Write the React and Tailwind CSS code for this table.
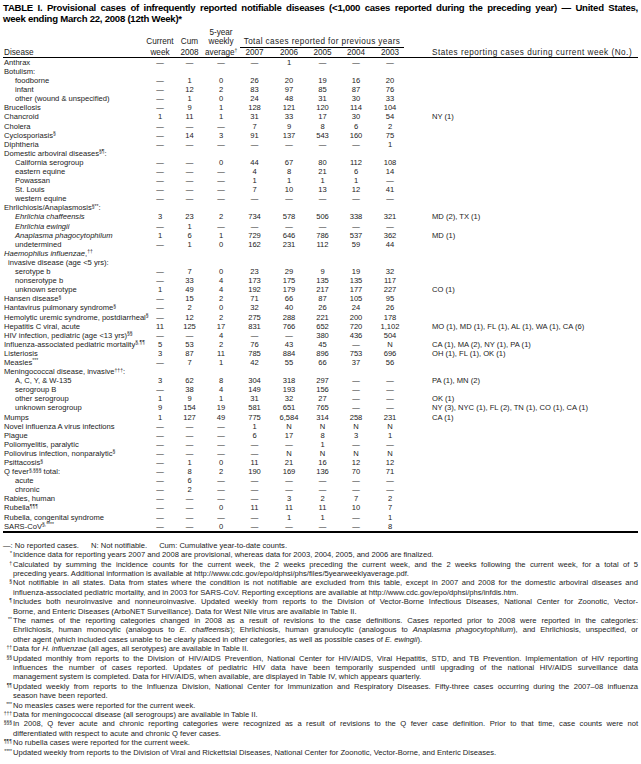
import React from 'react';

const D = '—';

// superscript footnote marker
function S({ children }) {
  return <sup className="text-[5px] -top-[2.5px]">{children}</sup>;
}

const rows = [
  { l: 'Anthrax', v: [D, D, D, D, '1', D, D, D] },
  { l: 'Botulism:' },
  { l: 'foodborne', i: 2, v: [D, '1', '0', '26', '20', '19', '16', '20'] },
  { l: 'infant', i: 2, v: [D, '12', '2', '83', '97', '85', '87', '76'] },
  { l: 'other (wound & unspecified)', i: 2, v: [D, '1', '0', '24', '48', '31', '30', '33'] },
  { l: 'Brucellosis', v: [D, '9', '1', '128', '121', '120', '114', '104'] },
  { l: 'Chancroid', v: ['1', '11', '1', '31', '33', '17', '30', '54'], s: 'NY (1)' },
  { l: 'Cholera', v: [D, D, D, '7', '9', '8', '6', '2'] },
  { l: <>Cyclosporiasis<S>§</S></>, v: [D, '14', '3', '91', '137', '543', '160', '75'] },
  { l: 'Diphtheria', v: [D, D, D, D, D, D, D, '1'] },
  { l: <>Domestic arboviral diseases<S>§¶</S>:</> },
  { l: 'California serogroup', i: 2, v: [D, D, '0', '44', '67', '80', '112', '108'] },
  { l: 'eastern equine', i: 2, v: [D, D, D, '4', '8', '21', '6', '14'] },
  { l: 'Powassan', i: 2, v: [D, D, D, '1', '1', '1', '1', D] },
  { l: 'St. Louis', i: 2, v: [D, D, D, '7', '10', '13', '12', '41'] },
  { l: 'western equine', i: 2, v: [D, D, D, D, D, D, D, D] },
  { l: <>Ehrlichiosis/Anaplasmosis<S>§**</S>:</> },
  { l: <i>Ehrlichia chaffeensis</i>, i: 2, v: ['3', '23', '2', '734', '578', '506', '338', '321'], s: 'MD (2), TX (1)' },
  { l: <i>Ehrlichia ewingii</i>, i: 2, v: [D, '1', D, D, D, D, D, D] },
  { l: <i>Anaplasma phagocytophilum</i>, i: 2, v: ['1', '6', '1', '729', '646', '786', '537', '362'], s: 'MD (1)' },
  { l: 'undetermined', i: 2, v: [D, '1', '0', '162', '231', '112', '59', '44'] },
  { l: <><i>Haemophilus influenzae</i>,<S>††</S></> },
  { l: 'invasive disease (age <5 yrs):', i: 1 },
  { l: 'serotype b', i: 2, v: [D, '7', '0', '23', '29', '9', '19', '32'] },
  { l: 'nonserotype b', i: 2, v: [D, '33', '4', '173', '175', '135', '135', '117'] },
  { l: 'unknown serotype', i: 2, v: ['1', '49', '4', '192', '179', '217', '177', '227'], s: 'CO (1)' },
  { l: <>Hansen disease<S>§</S></>, v: [D, '15', '2', '71', '66', '87', '105', '95'] },
  { l: <>Hantavirus pulmonary syndrome<S>§</S></>, v: [D, '2', '0', '32', '40', '26', '24', '26'] },
  { l: <>Hemolytic uremic syndrome, postdiarrheal<S>§</S></>, v: [D, '12', '2', '275', '288', '221', '200', '178'] },
  { l: 'Hepatitis C viral, acute', v: ['11', '125', '17', '831', '766', '652', '720', '1,102'], s: 'MO (1), MD (1), FL (1), AL (1), WA (1), CA (6)' },
  { l: <>HIV infection, pediatric (age &lt;13 yrs)<S>§§</S></>, v: [D, D, '4', D, D, '380', '436', '504'] },
  { l: <>Influenza-associated pediatric mortality<S>§,¶¶</S></>, v: ['5', '53', '2', '76', '43', '45', D, 'N'], s: 'CA (1), MA (2), NY (1), PA (1)' },
  { l: 'Listeriosis', v: ['3', '87', '11', '785', '884', '896', '753', '696'], s: 'OH (1), FL (1), OK (1)' },
  { l: <>Measles<S>***</S></>, v: [D, '7', '1', '42', '55', '66', '37', '56'] },
  { l: <>Meningococcal disease, invasive<S>†††</S>:</> },
  { l: 'A, C, Y, & W-135', i: 2, v: ['3', '62', '8', '304', '318', '297', D, D], s: 'PA (1), MN (2)' },
  { l: 'serogroup B', i: 2, v: [D, '38', '4', '149', '193', '156', D, D] },
  { l: 'other serogroup', i: 2, v: ['1', '9', '1', '31', '32', '27', D, D], s: 'OK (1)' },
  { l: 'unknown serogroup', i: 2, v: ['9', '154', '19', '581', '651', '765', D, D], s: 'NY (3), NYC (1), FL (2), TN (1), CO (1), CA (1)' },
  { l: 'Mumps', v: ['1', '127', '49', '775', '6,584', '314', '258', '231'], s: 'CA (1)' },
  { l: 'Novel influenza A virus infections', v: [D, D, D, '1', 'N', 'N', 'N', 'N'] },
  { l: 'Plague', v: [D, D, D, '6', '17', '8', '3', '1'] },
  { l: 'Poliomyelitis, paralytic', v: [D, D, D, D, D, '1', D, D] },
  { l: <>Poliovirus infection, nonparalytic<S>§</S></>, v: [D, D, D, D, 'N', 'N', 'N', 'N'] },
  { l: <>Psittacosis<S>§</S></>, v: [D, '1', '0', '11', '21', '16', '12', '12'] },
  { l: <>Q fever<S>§,§§§</S> total:</>, v: [D, '8', '2', '190', '169', '136', '70', '71'] },
  { l: 'acute', i: 2, v: [D, '6', D, D, D, D, D, D] },
  { l: 'chronic', i: 2, v: [D, '2', D, D, D, D, D, D] },
  { l: 'Rabies, human', v: [D, D, D, D, '3', '2', '7', '2'] },
  { l: <>Rubella<S>¶¶¶</S></>, v: [D, D, '0', '11', '11', '11', '10', '7'] },
  { l: 'Rubella, congenital syndrome', v: [D, D, D, D, '1', '1', D, '1'] },
  { l: <>SARS-CoV<S>§,****</S></>, v: [D, D, '0', D, D, D, D, '8'] },
];

const indent = ['pl-[1px]', 'pl-[5px]', 'pl-[12px]'];

const grid = 'grid grid-cols-[143px_28px_31px_32px_35px_34px_33px_34px_34px_1fr]';

const notes = [
  {
    m: '*',
    lines: [{ t: 'Incidence data for reporting years 2007 and 2008 are provisional, whereas data for  2003, 2004, 2005, and 2006 are finalized.' }],
  },
  {
    m: '†',
    lines: [
      { t: 'Calculated by summing the incidence counts for the current week, the 2 weeks preceding the current week, and the 2 weeks following the current week, for a total of 5', j: true },
      { t: 'preceding years. Additional information is available at http://www.cdc.gov/epo/dphsi/phs/files/5yearweeklyaverage.pdf.' },
    ],
  },
  {
    m: '§',
    lines: [
      { t: 'Not notifiable in all states. Data from states where the condition is not notifiable are excluded from this table, except in 2007 and 2008 for the domestic arboviral diseases and', j: true },
      { t: 'influenza-associated pediatric mortality, and in 2003 for SARS-CoV. Reporting exceptions are available at http://www.cdc.gov/epo/dphsi/phs/infdis.htm.' },
    ],
  },
  {
    m: '¶',
    lines: [
      { t: 'Includes both neuroinvasive and nonneuroinvasive. Updated weekly from reports to the Division of Vector-Borne Infectious Diseases, National Center for Zoonotic, Vector-', j: true },
      { t: 'Borne, and Enteric Diseases (ArboNET Surveillance). Data for West Nile virus are available in Table II.' },
    ],
  },
  {
    m: '**',
    lines: [
      { t: 'The names of the reporting categories changed in 2008 as a result of revisions to the case definitions. Cases reported prior to 2008 were reported in the categories:', j: true },
      {
        t: <>Ehrlichiosis, human monocytic (analogous to <i>E. chaffeensis</i>); Ehrlichiosis, human granulocytic (analogous to <i>Anaplasma phagocytophilum</i>), and Ehrlichiosis, unspecified, or</>,
        j: true,
      },
      { t: <>other agent (which included cases unable to be clearly placed in other categories, as well as possible cases of <i>E. ewingii</i>).</> },
    ],
  },
  {
    m: '††',
    lines: [{ t: <>Data for <i>H. influenzae</i> (all ages, all serotypes) are available in Table II.</> }],
  },
  {
    m: '§§',
    lines: [
      { t: 'Updated monthly from reports to the Division of HIV/AIDS Prevention, National Center for HIV/AIDS, Viral Hepatitis, STD, and TB Prevention. Implementation of HIV reporting', j: true },
      { t: 'influences the number of cases reported. Updates of pediatric HIV data have been temporarily suspended until upgrading of the national HIV/AIDS surveillance data', j: true },
      { t: 'management system is completed. Data for HIV/AIDS, when available, are displayed in Table IV, which appears quarterly.' },
    ],
  },
  {
    m: '¶¶',
    lines: [
      { t: 'Updated weekly from reports to the Influenza Division, National Center for Immunization and Respiratory Diseases. Fifty-three cases occurring during the 2007–08 influenza', j: true },
      { t: 'season have been reported.' },
    ],
  },
  { m: '***', lines: [{ t: 'No measles cases were reported for the current week.' }] },
  { m: '†††', lines: [{ t: 'Data for meningococcal disease (all serogroups) are available in Table II.' }] },
  {
    m: '§§§',
    lines: [
      { t: 'In 2008, Q fever acute and chronic reporting categories were recognized as a result of revisions to the Q fever case definition. Prior to that time, case counts were not', j: true },
      { t: 'differentiated with respect to acute and chronic Q fever cases.' },
    ],
  },
  { m: '¶¶¶', lines: [{ t: 'No rubella cases were reported for the current week.' }] },
  { m: '****', lines: [{ t: 'Updated weekly from reports to the Division of Viral and Rickettsial Diseases, National Center for Zoonotic, Vector-Borne, and Enteric Diseases.' }] },
];

export default function App() {
  return (
    <div className="w-[641px] h-[764px] bg-white text-[#222] px-[3px] overflow-hidden [font-family:'Liberation_Sans',Arial,sans-serif]">
      {/* Title */}
      <div className="pt-[2px] text-[9.6px] leading-[11px] font-bold tracking-[-0.25px] text-black">
        <div className="text-justify [text-align-last:justify]">
          TABLE I. Provisional cases of infrequently reported notifiable diseases (&lt;1,000 cases reported during the preceding year) — United States,
        </div>
        <div>week ending March 22, 2008 (12th Week)*</div>
      </div>

      {/* Header */}
      <div className={`${grid} mt-[4px] text-[8.2px] leading-[9.3px] border-b border-black`}>
        <div className="col-start-4 text-center whitespace-nowrap">5-year</div>
        <div className="col-start-2 text-center">Current</div>
        <div className="text-center">Cum</div>
        <div className="text-center">weekly</div>
        <div className="col-span-5 px-[3px]">
          <div className="text-center border-b border-black whitespace-nowrap tracking-[0.4px]">Total cases reported for previous years</div>
        </div>
        <div />
        <div className="pl-[1px]">Disease</div>
        <div className="text-center">week</div>
        <div className="text-center">2008</div>
        <div className="text-center whitespace-nowrap">
          average<S>†</S>
        </div>
        <div className="text-center">2007</div>
        <div className="text-center">2006</div>
        <div className="text-center">2005</div>
        <div className="text-center">2004</div>
        <div className="text-center">2003</div>
        <div className="pl-[25px] whitespace-nowrap tracking-[0.5px]">States reporting cases during current week (No.)</div>
      </div>

      {/* Body rows */}
      <div className="border-b-2 border-black text-[7.6px] leading-[9.1px]">
        {rows.map((r, k) => (
          <div key={k} className={`${grid} h-[9.1px]`}>
            <div className={`${indent[r.i || 0]} whitespace-nowrap`}>{r.l}</div>
            {(r.v || ['', '', '', '', '', '', '', '']).map((x, n) => (
              <div key={n} className="text-center whitespace-nowrap">
                {x}
              </div>
            ))}
            <div className="pl-[25px] whitespace-nowrap">{r.s}</div>
          </div>
        ))}
      </div>

      {/* Footnotes */}
      <div className="mt-[8px] text-[7.6px] leading-[9.4px]">
        <div className="whitespace-nowrap">
          —: No reported cases.<span className="ml-[12px]">N: Not notifiable.</span>
          <span className="ml-[12px]">Cum: Cumulative year-to-date counts.</span>
        </div>
        {notes.map((f, k) => (
          <div key={k} className="flex">
            <div className="w-[10px] shrink-0 text-right pr-[1px] whitespace-nowrap">
              <span className="text-[5px] leading-none relative -top-[2px]">{f.m}</span>
            </div>
            <div className="flex-1">
              {f.lines.map((l, n) => (
                <div key={n} className={l.j ? 'text-justify [text-align-last:justify]' : ''}>
                  {l.t}
                </div>
              ))}
            </div>
          </div>
        ))}
      </div>
    </div>
  );
}
